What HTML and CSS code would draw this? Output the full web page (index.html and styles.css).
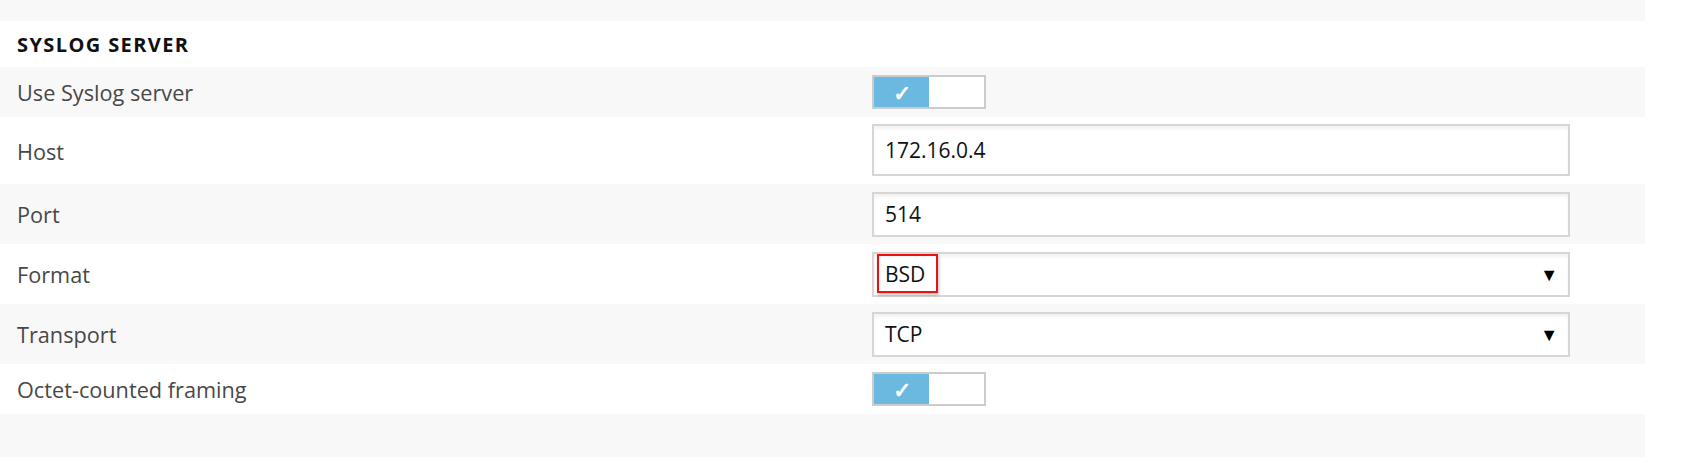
FILE: index.html
```html
<!DOCTYPE html>
<html>
<head>
<meta charset="utf-8">
<link rel="stylesheet" href="styles.css">
</head>
<body>
<div class="panel">
  <div class="prev-tail"></div>
  <div class="section-head">SYSLOG SERVER</div>
  <div class="row alt row-toggle">
    <div class="label">Use Syslog server</div>
    <div class="control"><div class="toggle"><span class="on">&#10003;</span><span class="off"></span></div></div>
  </div>
  <div class="row row-host">
    <div class="label">Host</div>
    <div class="control"><div class="field field-tall">172.16.0.4</div></div>
  </div>
  <div class="row alt row-std">
    <div class="label">Port</div>
    <div class="control"><div class="field">514</div></div>
  </div>
  <div class="row row-std">
    <div class="label">Format</div>
    <div class="control"><div class="field select"><span class="value">BSD</span><span class="arrow">&#9660;</span><span class="highlight"></span></div></div>
  </div>
  <div class="row alt row-std">
    <div class="label">Transport</div>
    <div class="control"><div class="field select"><span class="value">TCP</span><span class="arrow">&#9660;</span></div></div>
  </div>
  <div class="row row-toggle">
    <div class="label">Octet-counted framing</div>
    <div class="control"><div class="toggle"><span class="on">&#10003;</span><span class="off"></span></div></div>
  </div>
  <div class="tail"></div>
</div>
</body>
</html>
```

FILE: styles.css
```css
html, body {
  margin: 0;
  padding: 0;
  background: #ffffff;
}
body {
  font-family: "Open Sans", "Noto Sans", sans-serif;
  color: #444444;
}
.panel {
  width: 1645px;
  display: flex;
  flex-direction: column;
}
.prev-tail {
  height: 21px;
  background: #f8f8f8;
}
.section-head {
  height: 46px;
  display: flex;
  align-items: center;
  padding-left: 17px;
  font-weight: 700;
  font-size: 20px;
  letter-spacing: 1.4px;
  color: #111111;
  background: #ffffff;
}
.row {
  display: grid;
  grid-template-columns: 872px 698px;
  align-items: center;
  background: #ffffff;
}
.row.alt {
  background: #f8f8f8;
}
.row-toggle { height: 50px; }
.row-host { height: 67px; }
.row-std { height: 60px; }
.label {
  padding-left: 17px;
  font-size: 21.7px;
  color: #484848;
  padding-top: 1px;
}
.control {
  display: flex;
  align-items: center;
}
.toggle {
  width: 110px;
  height: 30px;
  border: 2px solid #cccccc;
  display: flex;
  background: #ffffff;
}
.toggle .on {
  width: 55px;
  background: #6bb9e0;
  color: #ffffff;
  font-size: 22px;
  font-weight: 700;
  display: flex;
  align-items: center;
  justify-content: center;
}
.toggle .off {
  flex: 1;
}
.field {
  position: relative;
  box-sizing: border-box;
  width: 698px;
  height: 45px;
  border: 2px solid #d6d6d6;
  background: #ffffff;
  box-shadow: inset 0 3px 3px rgba(0, 0, 0, 0.05);
  display: flex;
  align-items: center;
  padding-left: 11px;
  padding-right: 10px;
  font-size: 21px;
  color: #111111;
}
.field-tall {
  height: 52px;
  margin-top: -1px;
}
.select {
  justify-content: space-between;
}
.arrow {
  font-size: 18px;
  color: #000000;
}
.highlight {
  position: absolute;
  left: 3px;
  top: 0px;
  width: 57px;
  height: 35px;
  border: 2px solid #ee1111;
  box-shadow: 1px 2px 3px rgba(0, 0, 0, 0.25);
}
.tail {
  height: 43px;
  background: #f8f8f8;
}
```
